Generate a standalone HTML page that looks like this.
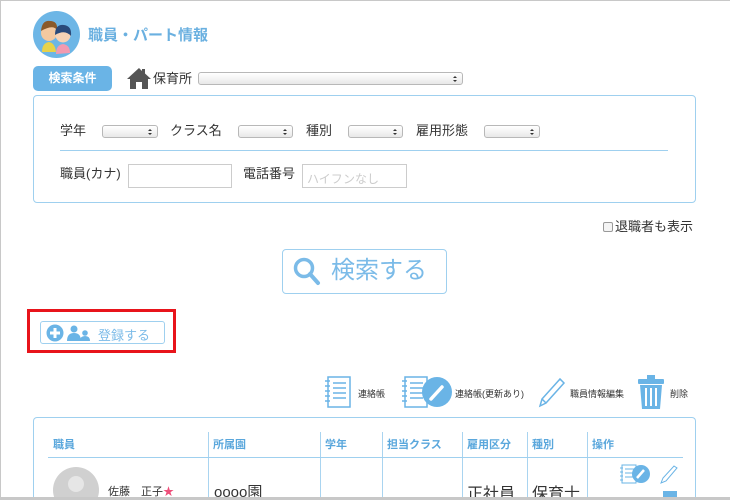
<!DOCTYPE html>
<html><head><meta charset="utf-8"><style>
*{margin:0;padding:0;box-sizing:border-box}
html,body{width:730px;height:500px;overflow:hidden}
body{position:relative;background:#fff;font-family:"Liberation Sans","Noto Sans CJK JP",sans-serif;color:#333}
.a{position:absolute}
.frame{left:0;top:0;width:730px;height:498px;border:1px solid #c8c8c8;border-right:none}
.sel{position:absolute;height:13px;border:1px solid #b8b8b8;border-radius:3px;background:linear-gradient(#fff,#e8e8e8)}
.sel:after{content:"";position:absolute;right:5px;top:3px;width:0;height:0;border-left:2px solid transparent;border-right:2px solid transparent;border-bottom:2px solid #333}
.sel:before{content:"";position:absolute;right:5px;top:7px;width:0;height:0;border-left:2px solid transparent;border-right:2px solid transparent;border-top:2px solid #333}
.lbl{position:absolute;font-size:13px;line-height:14px;color:#333}
.th{position:absolute;top:436px;font-size:11px;font-weight:bold;color:#5aa7dc}
.vl{position:absolute;top:432px;width:1px;height:68px;background:#a9d4f0}
.ic{position:absolute;font-size:9px;color:#333}
</style></head><body>
<div class="a frame"></div>
<svg class="a" style="left:33px;top:11px" width="47" height="47" viewBox="0 0 47 47">
<circle cx="23.5" cy="23.5" r="23.5" fill="#6db6e6"/>
<circle cx="16" cy="22" r="8" fill="#f4c9a0"/><path d="M8 20q1-11 9-10q8 0 7 9q-4-6-16 1z" fill="#8a5a2a"/>
<circle cx="30" cy="24" r="7.5" fill="#f7d3b5"/><path d="M22 24q0-11 9-10q8 1 7 11q-6-7-16-1z" fill="#2a4a7a"/>
<path d="M9 41q0-9 7-10q6 1 7 10z" fill="#e8d24a"/><path d="M23 43q0-9 7-10q7 1 7 9z" fill="#f29ab0"/>
</svg>
<div class="a" style="left:88px;top:24px;font-size:15px;font-weight:bold;color:#6ab0e0">職員・パート情報</div>
<div class="a" style="left:33px;top:66px;width:79px;height:25px;border-radius:5px;background:#6ab4e6;color:#fff;font-size:12px;font-weight:bold;text-align:center;line-height:25px">検索条件</div>
<svg class="a" style="left:127px;top:67px" width="24" height="23" viewBox="0 0 24 23"><path d="M12 1L0 12h3v10h6v-7h6v7h6V12h3L18 6.5V2h-3v2z" fill="#555"/></svg>
<div class="lbl" style="left:153px;top:72px">保育所</div>
<div class="sel" style="left:198px;top:72px;width:265px"></div>
<div class="a" style="left:33px;top:95px;width:663px;height:108px;border:1px solid #9fd0ef;border-radius:4px"></div>
<div class="lbl" style="left:60px;top:124px">学年</div><div class="sel" style="left:102px;top:125px;width:56px"></div>
<div class="lbl" style="left:170px;top:124px">クラス名</div><div class="sel" style="left:238px;top:125px;width:55px"></div>
<div class="lbl" style="left:306px;top:124px">種別</div><div class="sel" style="left:348px;top:125px;width:55px"></div>
<div class="lbl" style="left:416px;top:124px">雇用形態</div><div class="sel" style="left:484px;top:125px;width:56px"></div>
<div class="a" style="left:60px;top:150px;width:608px;height:1px;background:#9fd0ef"></div>
<div class="lbl" style="left:60px;top:167px">職員(カナ)</div>
<div class="a" style="left:128px;top:164px;width:104px;height:24px;border:1px solid #ccc"></div>
<div class="lbl" style="left:243px;top:167px">電話番号</div>
<div class="a" style="left:302px;top:164px;width:105px;height:24px;border:1px solid #ccc;font-size:12px;color:#ccc;padding:5px 0 0 4px">ハイフンなし</div>
<div class="a" style="left:603px;top:222px;width:10px;height:10px;border:1px solid #999;border-radius:2px;background:#f4f4f4"></div>
<div class="lbl" style="left:615px;top:220px">退職者も表示</div>
<div class="a" style="left:282px;top:249px;width:165px;height:45px;border:1px solid #9fd0ef;border-radius:4px"></div>
<svg class="a" style="left:292px;top:256px" width="30" height="30" viewBox="0 0 30 30"><circle cx="12" cy="12" r="8.5" fill="none" stroke="#7bbbe8" stroke-width="3.5"/><path d="M18 18l8 9" stroke="#7bbbe8" stroke-width="4" stroke-linecap="round"/></svg>
<div class="a" style="left:331px;top:256px;font-size:24px;color:#7bbbe8;line-height:30px">検索する</div>
<div class="a" style="left:27px;top:309px;width:149px;height:44px;border:3px solid #e8141b"></div>
<div class="a" style="left:40px;top:321px;width:125px;height:23px;border:1px solid #9fd0ef;border-radius:3px"></div>
<svg class="a" style="left:45px;top:323px" width="50" height="20" viewBox="0 0 50 20"><circle cx="10" cy="10" r="8.5" fill="#6ab4e6"/><path d="M10 5v10M5 10h10" stroke="#fff" stroke-width="3"/><circle cx="29" cy="6" r="3.5" fill="#6ab4e6"/><path d="M22 18q0-8 7-8q7 0 7 8z" fill="#6ab4e6"/><circle cx="40" cy="10" r="2.8" fill="#6ab4e6"/><path d="M35 18q0-5 5-5q5 0 5 5z" fill="#6ab4e6"/></svg>
<div class="a" style="left:98px;top:325px;font-size:13px;color:#7bbbe8">登録する</div>
<svg class="a" style="left:323px;top:376px" width="30" height="32" viewBox="0 0 30 32"><rect x="5" y="1" width="22" height="30" fill="#fff" stroke="#6ab4e6" stroke-width="1.5"/><path d="M10 7h13M10 12h13M10 17h13M10 22h13M2 5h5M2 10h5M2 15h5M2 20h5M2 25h5" stroke="#6ab4e6" stroke-width="1.5"/></svg>
<div class="ic" style="left:358px;top:387px">連絡帳</div>
<svg class="a" style="left:400px;top:376px" width="54" height="32" viewBox="0 0 54 32"><rect x="5" y="1" width="22" height="30" fill="#fff" stroke="#6ab4e6" stroke-width="1.5"/><path d="M10 7h13M10 12h13M10 17h13M10 22h13M2 5h5M2 10h5M2 15h5M2 20h5M2 25h5" stroke="#6ab4e6" stroke-width="1.5"/><circle cx="37" cy="16" r="15" fill="#6ab4e6"/><path d="M31 23l11-12" stroke="#fff" stroke-width="3.5" stroke-linecap="round"/></svg>
<div class="ic" style="left:455px;top:387px">連絡帳(更新あり)</div>
<svg class="a" style="left:537px;top:376px" width="30" height="32" viewBox="0 0 30 32"><path d="M3 30l2-7L23 3l4 4L9 27z" fill="none" stroke="#6ab4e6" stroke-width="1.5"/><path d="M5 23l4 4" stroke="#6ab4e6" stroke-width="1.5"/></svg>
<div class="ic" style="left:570px;top:387px">職員情報編集</div>
<svg class="a" style="left:637px;top:374px" width="28" height="36" viewBox="0 0 28 36"><rect x="10" y="1" width="8" height="4" fill="#6ab4e6"/><rect x="1" y="5" width="26" height="5" rx="1" fill="#6ab4e6"/><path d="M3 11h22l-2 24H5z" fill="#6ab4e6"/><path d="M9 14v18M14 14v18M19 14v18" stroke="#fff" stroke-width="2"/></svg>
<div class="ic" style="left:670px;top:387px">削除</div>
<div class="a" style="left:33px;top:417px;width:663px;height:90px;border:1px solid #9fd0ef;border-bottom:none;border-radius:4px 4px 0 0"></div>
<div class="th" style="left:53px">職員</div>
<div class="th" style="left:213px">所属園</div>
<div class="th" style="left:325px">学年</div>
<div class="th" style="left:387px">担当クラス</div>
<div class="th" style="left:467px">雇用区分</div>
<div class="th" style="left:532px">種別</div>
<div class="th" style="left:592px">操作</div>
<div class="vl" style="left:208px"></div><div class="vl" style="left:320px"></div><div class="vl" style="left:382px"></div><div class="vl" style="left:462px"></div><div class="vl" style="left:527px"></div><div class="vl" style="left:587px"></div>
<div class="a" style="left:48px;top:457px;width:635px;height:1px;background:#9fd0ef"></div>
<svg class="a" style="left:53px;top:467px" width="46" height="33" viewBox="0 0 46 33"><circle cx="23" cy="23" r="23" fill="#d0d0d0"/><circle cx="23" cy="17" r="8" fill="#e6e6e6"/></svg>
<div class="a" style="left:108px;top:483px;font-size:11px">佐藤　正子<span style="color:#ee4f7a">★</span></div>
<div class="a" style="left:214px;top:481px;font-size:15px">oooo園</div>
<div class="a" style="left:467px;top:480px;font-size:16px">正社員</div>
<div class="a" style="left:532px;top:480px;font-size:16px">保育士</div>
<svg class="a" style="left:619px;top:464px" width="66" height="36" viewBox="0 0 66 36"><rect x="3" y="1" width="14" height="18" fill="#fff" stroke="#6ab4e6"/><path d="M6 5h9M6 9h9M6 13h9M1 4h3M1 8h3M1 12h3M1 16h3" stroke="#6ab4e6"/><circle cx="22" cy="10" r="9" fill="#6ab4e6"/><path d="M18 14l7-8" stroke="#fff" stroke-width="2.5"/><path d="M42 19l2-5L55 2l3 2L47 17z" fill="none" stroke="#6ab4e6"/><rect x="44" y="27" width="14" height="10" fill="#6ab4e6"/></svg>
<div class="a" style="left:0;top:497px;width:730px;height:3px;background:#c8c8c8"></div>
</body></html>
